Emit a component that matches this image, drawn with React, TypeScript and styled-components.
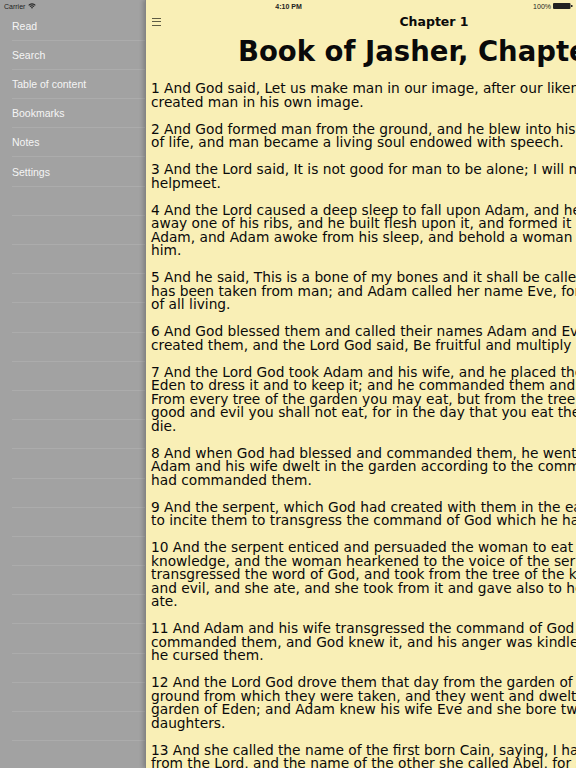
import styled, { createGlobalStyle } from "styled-components";

const verses = [
  "1 And God said, Let us make man in our image, after our likeness, and God created man in his own image.",
  "2 And God formed man from the ground, and he blew into his nostrils the breath of life, and man became a living soul endowed with speech.",
  "3 And the Lord said, It is not good for man to be alone; I will make unto him a helpmeet.",
  "4 And the Lord caused a deep sleep to fall upon Adam, and he slept, and he took away one of his ribs, and he built flesh upon it, and formed it and brought it to Adam, and Adam awoke from his sleep, and behold a woman was standing before him.",
  "5 And he said, This is a bone of my bones and it shall be called woman, for this has been taken from man; and Adam called her name Eve, for she was the mother of all living.",
  "6 And God blessed them and called their names Adam and Eve in the day that he created them, and the Lord God said, Be fruitful and multiply and fill the earth.",
  "7 And the Lord God took Adam and his wife, and he placed them in the garden of Eden to dress it and to keep it; and he commanded them and said unto them, From every tree of the garden you may eat, but from the tree of the knowledge of good and evil you shall not eat, for in the day that you eat thereof you shall surely die.",
  "8 And when God had blessed and commanded them, he went from them, and Adam and his wife dwelt in the garden according to the command which the Lord had commanded them.",
  "9 And the serpent, which God had created with them in the earth, came to them to incite them to transgress the command of God which he had commanded them.",
  "10 And the serpent enticed and persuaded the woman to eat from the tree of knowledge, and the woman hearkened to the voice of the serpent, and she transgressed the word of God, and took from the tree of the knowledge of good and evil, and she ate, and she took from it and gave also to her husband and he ate.",
  "11 And Adam and his wife transgressed the command of God which he commanded them, and God knew it, and his anger was kindled against them and he cursed them.",
  "12 And the Lord God drove them that day from the garden of Eden, to till the ground from which they were taken, and they went and dwelt at the east of the garden of Eden; and Adam knew his wife Eve and she bore two sons and three daughters.",
  "13 And she called the name of the first born Cain, saying, I have obtained a man from the Lord, and the name of the other she called Abel, for she said, In vanity we came into the earth, and in vanity we shall be taken from it.",
];

const menu = ["Read", "Search", "Table of content", "Bookmarks", "Notes", "Settings"];
const emptyRows = Array.from({ length: 20 }, (_, i) => i);

function App() {
  return (
    <>
      <GlobalStyle />
      <Screen>
        <StatusBar>
          <Carrier>
            Carrier
            <svg width="8" height="6" viewBox="0 0 8 6">
              <path d="M0.3 2 A5 5 0 0 1 7.7 2 L6.9 2.8 A4 4 0 0 0 1.1 2.8 Z" fill="#222" />
              <path d="M1.6 3.3 A3.2 3.2 0 0 1 6.4 3.3 L5.6 4.1 A2.2 2.2 0 0 0 2.4 4.1 Z" fill="#222" />
              <path d="M3 4.6 A1.4 1.4 0 0 1 5 4.6 L4 5.7 Z" fill="#222" />
            </svg>
          </Carrier>
          <Clock>4:10 PM</Clock>
          <Battery>
            100%
            <svg width="20" height="6" viewBox="0 0 20 6">
              <rect x="0" y="0" width="17.5" height="6" rx="1" fill="#222" />
              <rect x="18" y="2" width="1.5" height="2" fill="#222" />
            </svg>
          </Battery>
        </StatusBar>

        <Sidebar>
          {menu.map((item) => (
            <MenuRow key={item}>{item}</MenuRow>
          ))}
          {emptyRows.map((i) => (
            <MenuRow key={i} />
          ))}
        </Sidebar>

        <Reader>
          <NavBar>
            <MenuButton>
              <span />
              <span />
              <span />
            </MenuButton>
            <ChapterLabel>Chapter 1</ChapterLabel>
            <div />
          </NavBar>
          <Title>Book of Jasher, Chapter 1</Title>
          {verses.map((v) => (
            <Verse key={v}>{v}</Verse>
          ))}
        </Reader>
      </Screen>
    </>
  );
}

const GlobalStyle = createGlobalStyle`
  html, body {
    margin: 0;
    padding: 0;
    overflow: hidden;
  }
`;

const Screen = styled.div`
  position: relative;
  display: flex;
  width: 576px;
  height: 768px;
  overflow: hidden;
  background: #a2a2a2;
`;

const StatusBar = styled.div`
  position: absolute;
  top: 0;
  left: 0;
  right: 0;
  z-index: 2;
  height: 12px;
  display: grid;
  grid-template-columns: 1fr auto 1fr;
  align-items: center;
  padding: 0 3px 0 4px;
  font-family: "Liberation Sans", Arial, sans-serif;
  font-size: 7px;
  font-weight: bold;
  color: #222;
`;

const Carrier = styled.div`
  display: flex;
  align-items: center;
  gap: 3px;
  font-weight: normal;
`;

const Clock = styled.div`
  text-align: center;
`;

const Battery = styled.div`
  display: flex;
  align-items: center;
  justify-content: flex-end;
  gap: 2px;
  font-weight: normal;
`;

const Sidebar = styled.nav`
  flex: 0 0 146px;
  padding-top: 11.5px;
  background: #a2a2a2;
`;

const MenuRow = styled.div`
  height: 29.2px;
  box-sizing: border-box;
  margin-left: 12px;
  border-bottom: 1px solid #acacac;
  display: flex;
  align-items: center;
  font-family: "Liberation Sans", Arial, sans-serif;
  font-size: 10.5px;
  color: #f5f5f5;
`;

const Reader = styled.main`
  flex: 0 0 576px;
  position: relative;
  z-index: 1;
  background: #f9efb6;
  box-shadow: -1px 0 0 #858585, -3px 0 4px rgba(0, 0, 0, 0.2);
  padding-top: 11px;
  font-family: "DejaVu Sans", Verdana, sans-serif;
  color: #0a0a0a;
`;

const NavBar = styled.div`
  display: grid;
  grid-template-columns: 1fr auto 1fr;
  align-items: center;
  height: 21px;
  padding: 0 6px;
`;

const MenuButton = styled.div`
  display: flex;
  flex-direction: column;
  gap: 2.5px;
  width: 9px;
  & span {
    height: 1px;
    background: #5e5c44;
  }
`;

const ChapterLabel = styled.div`
  font-size: 12.5px;
  font-weight: bold;
`;

const Title = styled.h1`
  margin: 3px 0 15px;
  text-align: center;
  white-space: nowrap;
  font-size: 27.5px;
  line-height: 32px;
  font-weight: bold;
`;

const Verse = styled.p`
  margin: 0 -2px 13.5px 0;
  padding: 0 0 0 5px;
  font-size: 13.75px;
  line-height: 13.5px;
`;

export default App;
